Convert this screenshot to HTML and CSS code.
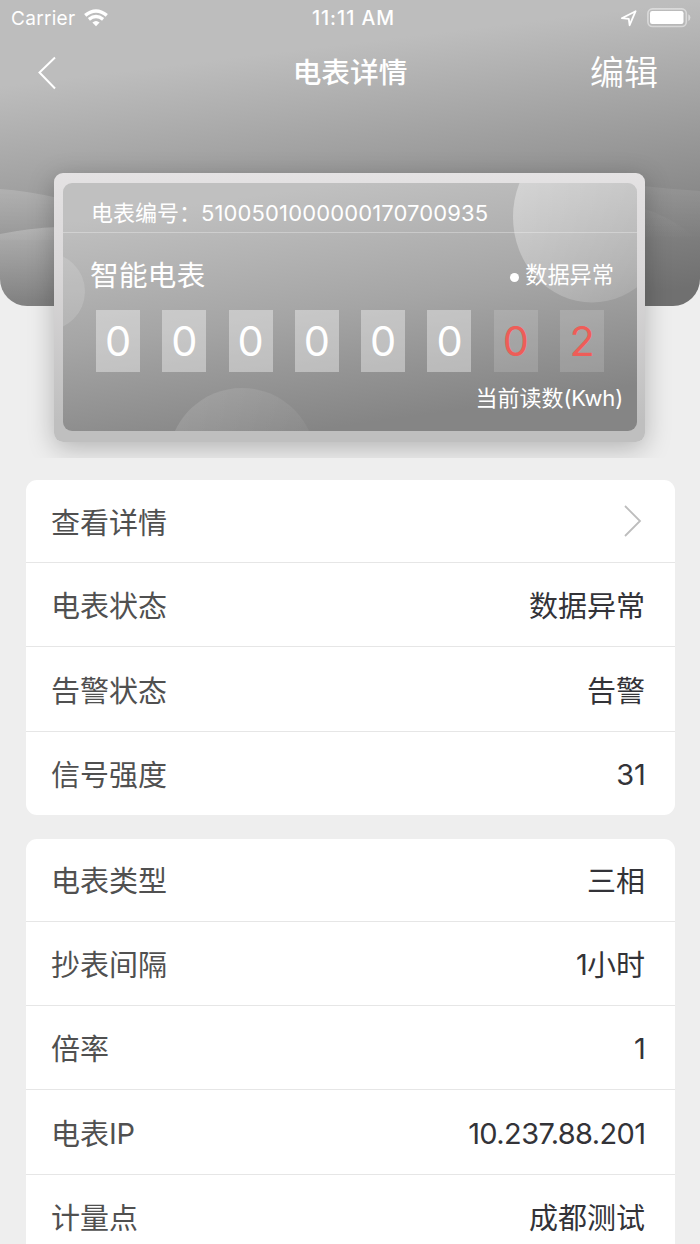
FILE: index.html
```
<!DOCTYPE html>
<html lang="zh-CN">
<head>
<meta charset="utf-8">
<title>电表详情</title>
<link rel="stylesheet" href="styles.css">
</head>
<body>
<div class="screen">
  <header class="hero">
    <svg class="hero-waves" viewBox="0 0 700 306" aria-hidden="true">
      <defs>
        <linearGradient id="w1" x1="0" y1="188" x2="0" y2="240" gradientUnits="userSpaceOnUse"><stop offset="0" stop-color="#fff" stop-opacity=".17"/><stop offset="1" stop-color="#fff" stop-opacity=".03"/></linearGradient>
        <linearGradient id="w2" x1="0" y1="226" x2="0" y2="300" gradientUnits="userSpaceOnUse"><stop offset="0" stop-color="#fff" stop-opacity=".24"/><stop offset="1" stop-color="#fff" stop-opacity="0"/></linearGradient>
        <linearGradient id="w3" x1="0" y1="184" x2="0" y2="240" gradientUnits="userSpaceOnUse"><stop offset="0" stop-color="#fff" stop-opacity=".08"/><stop offset="1" stop-color="#fff" stop-opacity="0"/></linearGradient>
      </defs>
      <path fill="url(#w1)" d="M0 189Q28 191 58 198L120 212V240H0Z"/>
      <path fill="url(#w2)" d="M0 234Q30 228 58 227L120 224V306H0Z"/>
      <path fill="url(#w3)" d="M600 180Q650 188 700 191V250H600Z"/>
      <path fill="url(#w3)" d="M600 204Q655 200 700 242V306H600Z"/>
    </svg>
    <div class="status">
      <div class="status-left"><span class="carrier">Carrier</span>
        <svg class="wifi" viewBox="0 0 24 18"><path fill="#fff" d="M12 17.2 8.4 13.6Q12 10.6 15.6 13.6Z"/><path fill="none" stroke="#fff" stroke-width="3.4" d="M1.2 6.4Q12-2.4 22.8 6.4M4.9 10.4Q12 4.8 19.1 10.4"/></svg>
      </div>
      <time class="clock">11:11 AM</time>
      <div class="status-right">
        <svg class="locate" viewBox="0 0 17 17"><path fill="none" stroke="#fff" stroke-width="1.8" stroke-linejoin="round" d="M1.8 8.2 15.6 1.2 9.6 15.2 8.8 8.8Z"/></svg>
        <svg class="battery" viewBox="0 0 44 20"><rect x=".9" y=".9" width="38.4" height="17.6" rx="4.5" fill="none" stroke="#fff" stroke-opacity=".45" stroke-width="1.6"/><rect x="3" y="3" width="33.5" height="13" rx="2.2" fill="#fff"/><path fill="#fff" fill-opacity=".5" d="M41.3 6.2Q43.4 7.2 43.4 9.6T41.3 13Z"/></svg>
      </div>
    </div>
    <nav class="nav">
      <svg class="back" viewBox="0 0 20 34"><path fill="none" stroke="#fff" stroke-width="2" d="M18 1.5 2.5 16.5 18 32.5"/></svg>
      <h1 class="title">电表详情</h1>
      <span class="edit">编辑</span>
    </nav>
  </header>

  <section class="meter">
    <div class="panel">
      <svg class="bubbles" viewBox="0 0 574 248" aria-hidden="true">
        <defs>
          <linearGradient id="b1" x1="0" y1="0" x2="1" y2="1"><stop offset="0" stop-color="#fff" stop-opacity=".42"/><stop offset="1" stop-color="#fff" stop-opacity=".08"/></linearGradient>
          <linearGradient id="b3" x1="0" y1="0" x2="1" y2=".6"><stop offset="0" stop-color="#fff" stop-opacity=".14"/><stop offset="1" stop-color="#fff" stop-opacity=".03"/></linearGradient>
        </defs>
        <ellipse cx="529" cy="34" rx="79" ry="85.5" fill="url(#b1)"/>
        <circle cx="-17" cy="108.5" r="39" fill="#fff" fill-opacity=".14"/>
        <circle cx="179" cy="278.7" r="73.7" fill="url(#b3)"/>
      </svg>
      <div class="serial"><span>电表编号：</span><span class="serial-no">5100501000000170700935</span></div>
      <div class="kind-row">
        <span class="kind">智能电表</span>
        <span class="state"><i class="dot"></i>数据异常</span>
      </div>
      <div class="digits">
        <span class="digit">0</span><span class="digit">0</span><span class="digit">0</span><span class="digit">0</span><span class="digit">0</span><span class="digit">0</span><span class="digit decimal">0</span><span class="digit decimal">2</span>
      </div>
      <div class="unit">当前读数<span class="kwh">(Kwh)</span></div>
    </div>
  </section>

  <section class="list">
    <div class="row first"><span class="label">查看详情</span><svg class="more" viewBox="0 0 18 32"><path fill="none" stroke="#bdbdbd" stroke-width="1.8" d="M1 1 16 16 1 31"/></svg></div>
    <div class="row"><span class="label">电表状态</span><span class="value">数据异常</span></div>
    <div class="row"><span class="label">告警状态</span><span class="value">告警</span></div>
    <div class="row"><span class="label">信号强度</span><span class="value"><span class="num">31</span></span></div>
  </section>

  <section class="list">
    <div class="row first"><span class="label">电表类型</span><span class="value">三相</span></div>
    <div class="row"><span class="label">抄表间隔</span><span class="value"><span class="num">1</span>小时</span></div>
    <div class="row"><span class="label">倍率</span><span class="value"><span class="num">1</span></span></div>
    <div class="row"><span class="label">电表<span class="num">IP</span></span><span class="value"><span class="num ip">10.237.88.201</span></span></div>
    <div class="row"><span class="label">计量点</span><span class="value">成都测试</span></div>
  </section>
</div>
</body>
</html>
```
FILE: styles.css
```
* { box-sizing: border-box; }
body {
  margin: 0;
  background: #eee;
  color: #333338;
  font-family: Inter, "Noto Sans CJK SC", sans-serif;
}
.screen { height: 1244px; overflow: hidden; }
svg { display: block; }

.hero {
  position: relative;
  height: 306px;
  border-radius: 0 0 27px 27px;
  overflow: hidden;
  color: #fff;
  background: linear-gradient(173deg, #bdbdbd 22%, #707070 95%);
}
.hero-waves { position: absolute; inset: 0; width: 700px; height: 306px; }
.status {
  position: relative;
  display: grid;
  grid-template-columns: 1fr auto 1fr;
  align-items: center;
  height: 36px;
  padding: 0 9px 0 11px;
  line-height: 24px;
}
.status-left, .status-right { display: flex; align-items: center; }
.status-right { justify-content: flex-end; gap: 10px; }
.carrier { padding-top: 1px; font-size: 19px; letter-spacing: .3px; }
.wifi { width: 24px; height: 18px; margin-left: 9px; }
.clock { font-size: 19.5px; font-weight: 500; letter-spacing: 1px; margin-left: 5px; }
.locate { width: 17px; height: 17px; }
.battery { width: 44px; height: 20px; }
.nav {
  position: relative;
  display: grid;
  grid-template-columns: 1fr auto 1fr;
  align-items: center;
  height: 72px;
  padding: 0 42px 0 37px;
}
.back { width: 20px; height: 34px; margin-top: 2px; }
.title { margin: 1px 0 0 5px; font-size: 28.7px; line-height: 40px; font-weight: 500; }
.edit { justify-self: end; margin-top: 2px; font-size: 34px; line-height: 48px; font-weight: 350; }

.meter {
  position: relative;
  width: 591px;
  height: 269px;
  margin: -133px auto 0 54px;
  padding: 10px 8px 11px 9px;
  border-radius: 9px;
  background: linear-gradient(#e4e2e3, #dad8d9 35%, #bfbfbf 92%);
  box-shadow: 0 6px 26px rgba(0, 0, 0, .25);
  clip-path: inset(-30px -28px -16px);
}
.panel {
  position: relative;
  height: 248px;
  border-radius: 9px;
  overflow: hidden;
  color: #fff;
  background: linear-gradient(172deg, #c0c0c0 12%, #a5a5a5 50%, #858585 86%);
}
.bubbles { position: absolute; inset: 0; width: 574px; height: 248px; }
.serial {
  position: relative;
  display: flex;
  height: 50px;
  padding: 14px 0 0 28px;
  border-bottom: 1px solid rgba(255, 255, 255, .3);
  font-size: 22px;
  line-height: 32px;
}
.serial-no { letter-spacing: .12px; }
.kind-row {
  position: relative;
  display: flex;
  align-items: center;
  justify-content: space-between;
  height: 77px;
  padding: 7px 23px 0 27px;
}
.kind { padding-top: 1px; font-size: 28.8px; line-height: 40px; }
.state { display: flex; align-items: center; gap: 6px; font-size: 22.2px; line-height: 32px; }
.dot { width: 9px; height: 9px; margin-top: 4px; border-radius: 50%; background: #fff; }
.digits {
  position: relative;
  display: flex;
  gap: 22.3px;
  padding-left: 33px;
}
.digit {
  width: 44px;
  height: 62px;
  background: rgba(255, 255, 255, .38);
  font-size: 41.5px;
  line-height: 62px;
  text-align: center;
}
.decimal { color: #ee5d58; background: rgba(255, 255, 255, .15); }
.unit {
  position: relative;
  padding: 10px 14px 0 0;
  font-size: 22px;
  line-height: 32px;
  text-align: right;
}
.kwh { letter-spacing: -.2px; }

.list {
  margin: 38px 25.5px 0;
  border-radius: 11px;
  background: #fff;
}
.list + .list { margin-top: 23.5px; }
.row {
  display: flex;
  align-items: center;
  justify-content: space-between;
  height: 84.4px;
  padding: 5px 29.5px 0 25.5px;
  border-top: 1px solid #e6e6e6;
  font-size: 29px;
  line-height: 42px;
}
.row.first { height: 82px; border-top: 0; }
.label { color: #505050; }
.num { position: relative; top: -1px; letter-spacing: -.2px; }
.ip { letter-spacing: -.6px; }
.value .num:last-child { margin-right: -.5px; }
.more { width: 18px; height: 32px; margin: -5px 3.5px 0 0; }
```
